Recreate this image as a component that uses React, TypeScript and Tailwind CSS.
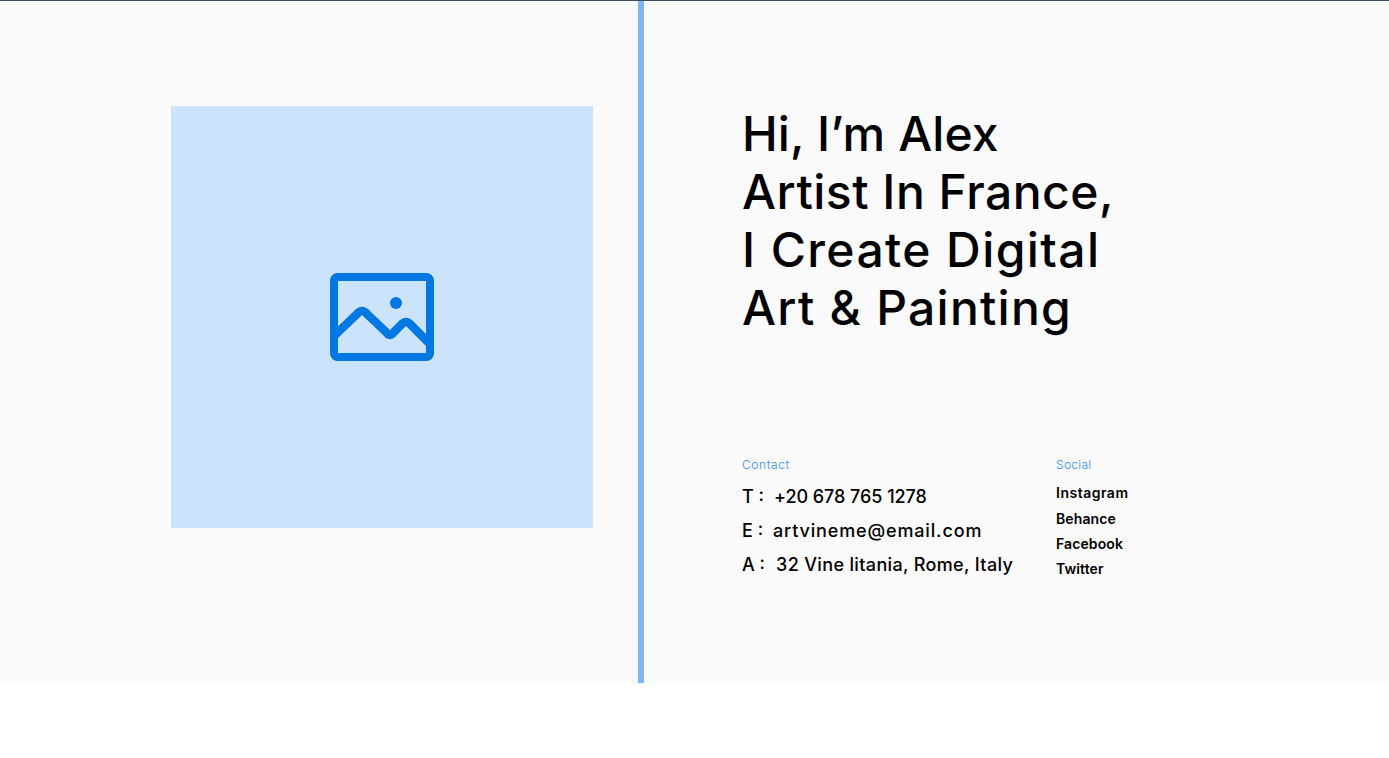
export default function App() {
  return (
    <div className="font-['Inter','Liberation_Sans',sans-serif] bg-white min-h-[758px]">
      <div className="h-px bg-[#3a4d63]" />
      <div className="flex h-[682px] bg-[#fafafa]">
        <div className="w-[638px] pl-[171px] pt-[105px]">
          <div className="w-[422px] h-[422px] bg-[#cce4fb] flex items-center justify-center">
            <svg width="104" height="88" viewBox="0 0 104 88" fill="none" stroke="#0078e3" strokeWidth="8" strokeLinejoin="round" strokeLinecap="butt">
              <rect x="4" y="4" width="96" height="80" rx="3.5" />
              <path strokeWidth="8.5" d="M4 63 L27 41 Q32 35 37 41 L56 59 Q60 65 64 59 L71 52 Q76 46 81 52 L100 71" />
              <circle cx="66" cy="30" r="6" fill="#0078e3" stroke="none" />
            </svg>
          </div>
        </div>
        <div className="w-[6px] bg-[#7cb9f4]" />
        <div className="flex-1 pl-[98px] pt-[104px]">
          <h1 className="text-[48px] leading-[58px] font-medium text-black">
            <div className="tracking-[0.1px]">Hi, I’m Alex</div>
            <div className="tracking-[0.5px]">Artist In France,</div>
            <div className="tracking-[1.4px]">I Create Digital</div>
            <div className="tracking-[1.25px]">Art &amp; Painting</div>
          </h1>
          <div className="flex mt-[120px]">
            <div className="w-[314px]">
              <div className="text-xs leading-4 text-[#2f8ff0] font-light tracking-[0.6px]">Contact</div>
              <div className="mt-[7px] text-[18px] leading-[34px] text-black font-medium flex flex-col">
                <div className="flex"><span className="w-[32px]">T :</span><span className="tracking-[-0.05px]">+20 678 765 1278</span></div>
                <div className="flex"><span className="w-[31px]">E :</span><span className="tracking-[0.85px]">artvineme@email.com</span></div>
                <div className="flex"><span className="w-[34px]">A :</span><span className="tracking-[0.35px]">32 Vine litania, Rome, Italy</span></div>
              </div>
            </div>
            <div>
              <div className="text-xs leading-4 text-[#2f8ff0] font-light tracking-[0.3px]">Social</div>
              <div className="mt-[7px] text-sm font-semibold text-black flex flex-col leading-[25px] tracking-[0.1px]">
                <div className="tracking-[0.5px]">Instagram</div>
                <div className="mt-px">Behance</div>
                <div>Facebook</div>
                <div>Twitter</div>
              </div>
            </div>
          </div>
        </div>
      </div>
    </div>
  );
}
